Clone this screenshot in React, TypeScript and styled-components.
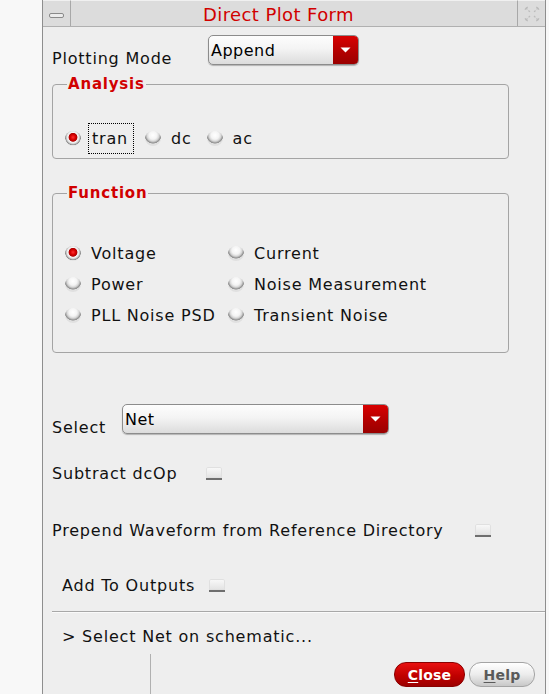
import React from 'react';
import styled, { createGlobalStyle } from 'styled-components';

const Global = createGlobalStyle`
  html, body { margin: 0; padding: 0; background: #f8f8f8; }
  body { font-family: "DejaVu Sans", "Liberation Sans", sans-serif; color: #111; }
`;

const Page = styled.div`
  width: 549px;
  height: 694px;
  overflow: hidden;
  display: flex;
`;

const Window = styled.div`
  margin-left: 42px;
  width: 504px;
  height: 694px;
  box-sizing: border-box;
  border-left: 1px solid #8e8e8e;
  border-right: 1px solid #8e8e8e;
  background: #eeeeee;
  display: flex;
  flex-direction: column;
`;

const TitleBar = styled.div`
  height: 27px;
  flex: none;
  box-sizing: border-box;
  display: flex;
  background: #dcdcdc;
  border-bottom: 1px solid #b0b0b0;
`;

const TitleButton = styled.div<{ $side: 'left' | 'right' }>`
  width: 28px;
  display: flex;
  align-items: center;
  justify-content: center;
  box-sizing: border-box;
  border-top: 1px solid #f0f0f0;
  ${(p) => (p.$side === 'left' ? 'border-right: 1px solid #a8a8a8;' : 'border-left: 1px solid #a8a8a8;')}
`;

const MinIcon = styled.div`
  width: 15px;
  height: 5px;
  margin-top: 4px;
  box-sizing: border-box;
  border: 1px solid #8a8a8a;
  border-radius: 2px;
  background: #ececec;
`;

const Title = styled.div`
  flex: 1;
  text-align: center;
  color: #d10000;
  font-size: 18px;
  letter-spacing: 0.4px;
  line-height: 27px;
  padding-right: 31px;
  border-top: 1px solid #f0f0f0;
  box-sizing: border-box;
`;

const Content = styled.div`
  flex: 1;
  display: flex;
  flex-direction: column;
  padding-left: 9px;
`;

const Row = styled.div<{ $top: number; $h: number; $indent?: number }>`
  display: flex;
  align-items: center;
  margin-top: ${(p) => p.$top}px;
  height: ${(p) => p.$h}px;
  padding-left: ${(p) => p.$indent ?? 0}px;
  flex: none;
`;

const Spacer = styled.div<{ $h: number }>`
  height: ${(p) => p.$h}px;
  flex: none;
`;

const Label = styled.span<{ $w?: number; $dy?: number }>`
  font-size: 16px;
  letter-spacing: 0.8px;
  ${(p) => (p.$w ? `width: ${p.$w}px;` : '')}
  position: relative;
  top: ${(p) => p.$dy ?? 0}px;
  white-space: nowrap;
`;

const Dropdown = styled.div<{ $w: number }>`
  width: ${(p) => p.$w}px;
  height: 30px;
  box-sizing: border-box;
  display: flex;
  border: 1px solid #8c8c8c;
  border-radius: 5px;
  overflow: hidden;
  background: linear-gradient(#fdfdfd 0%, #f4f4f4 45%, #dcdcdc 100%);
  box-shadow: 0 1px 1px rgba(0, 0, 0, 0.25);
`;

const DropdownText = styled.span`
  flex: 1;
  font-size: 16px;
  letter-spacing: 0.5px;
  padding: 2px 0 0 2px;
  line-height: 26px;
  color: #000;
`;

const DropdownArrow = styled.span`
  width: 25px;
  display: flex;
  align-items: center;
  justify-content: center;
  background: linear-gradient(#d80000, #b00000 60%, #9a0000);
`;

const Group = styled.fieldset<{ $padTop: number; $padBottom: number }>`
  margin: 0;
  width: 457px;
  box-sizing: border-box;
  border: 1px solid #a4a4a4;
  border-radius: 4px;
  padding: ${(p) => p.$padTop}px 0 ${(p) => p.$padBottom}px 12px;
  flex: none;
`;

const Legend = styled.legend`
  color: #d10000;
  font-weight: bold;
  font-size: 15px;
  line-height: 17px;
  letter-spacing: 0.8px;
  padding: 0 1px;
  margin-left: 2px;
`;

const RadioRow = styled.div`
  display: flex;
  align-items: center;
  height: 32px;
`;

const RadioGrid = styled.div`
  display: grid;
  grid-template-columns: 163px auto;
  grid-auto-rows: 31px;
  align-items: center;
`;

const RadioItem = styled.label<{ $ml?: number }>`
  display: flex;
  align-items: center;
  margin-left: ${(p) => p.$ml ?? 0}px;
`;

const RadioDot = styled.span<{ $on?: boolean }>`
  width: 16px;
  height: 15px;
  border-radius: 50%;
  flex: none;
  background: ${(p) =>
    p.$on
      ? 'radial-gradient(circle at 50% 42%, #ff3030 0, #d80000 2.5px, #b00000 4px, #f6f6f6 4.8px, #e4e4e4 6px, #8e8e8e 7.6px, #e4e4e4 8.2px)'
      : 'radial-gradient(circle at 50% 28%, #ffffff 0, #f4f4f4 4px, #d6d6d6 6px, #8a8a8a 8px, #e0e0e0 8.6px)'};
`;

const RadioText = styled.span<{ $focus?: boolean }>`
  font-size: 16px;
  letter-spacing: 0.8px;
  margin-left: ${(p) => (p.$focus ? 7 : 10)}px;
  ${(p) =>
    p.$focus
      ? 'border: 1px dotted #000; padding: 5px 5px 5px 3px; line-height: 19px;'
      : ''}
`;

const Check = styled.span<{ $ml: number }>`
  display: inline-block;
  width: 16px;
  height: 13px;
  margin-left: ${(p) => p.$ml}px;
  box-sizing: border-box;
  background: linear-gradient(#fafafa, #e2e2e2);
  border-bottom: 2px solid #6e6e6e;
  border-radius: 2px 2px 0 0;
  box-shadow: inset 0 0 0 1px #e0e0e0;
`;

const Separator = styled.div`
  margin-top: 14px;
  height: 1px;
  background: #a8a8a8;
  border-bottom: 1px solid #fafafa;
  flex: none;
`;

const BottomBar = styled.div`
  flex: 1;
  margin-top: 6px;
  display: flex;
  align-items: flex-start;
`;

const Divider = styled.div`
  width: 1px;
  align-self: stretch;
  background: #b0b0b0;
  margin-left: 98px;
`;

const Buttons = styled.div`
  margin-left: auto;
  margin-right: 10px;
  margin-top: 8px;
  display: flex;
  gap: 4px;
`;

const PillButton = styled.button<{ $primary?: boolean; $w: number }>`
  width: ${(p) => p.$w}px;
  height: 25px;
  border-radius: 12px;
  font-family: "DejaVu Sans", sans-serif;
  font-weight: bold;
  font-size: 14px;
  padding: 0;
  letter-spacing: 0.2px;
  ${(p) =>
    p.$primary
      ? `background: linear-gradient(#e81010, #c00000 55%, #9c0000);
         border: 1px solid #8a0000;
         color: #fff;`
      : `background: linear-gradient(#ffffff, #ececec 50%, #c8c8c8);
         border: 1px solid #a4a4a4;
         color: #5a5a5a;`}
  u { text-decoration-thickness: 1px; text-underline-offset: 2px; }
`;

const Arrow = () => (
  <svg width="11" height="6" viewBox="0 0 11 6">
    <path d="M0.5 0.5 L10.5 0.5 L5.5 5.5 Z" fill="#fff" />
  </svg>
);

const CloseX = () => (
  <svg width="18" height="18" viewBox="0 0 18 18">
    <g stroke="#bcbcbc" strokeWidth="1.3" strokeDasharray="2 1.5" fill="none">
      <path d="M3 3 L7 7 M11 11 L15 15 M15 3 L11 7 M7 11 L3 15" />
      <path d="M3 3 L6 1.5 M15 3 L12 1.5 M3 15 L6 16.5 M15 15 L12 16.5 M3 3 L1.5 6 M15 3 L16.5 6 M3 15 L1.5 12 M15 15 L16.5 12" />
    </g>
  </svg>
);

export default function App() {
  return (
    <Page>
      <Global />
      <Window>
        <TitleBar>
          <TitleButton $side="left">
            <MinIcon />
          </TitleButton>
          <Title>Direct Plot Form</Title>
          <TitleButton $side="right">
            <CloseX />
          </TitleButton>
        </TitleBar>
        <Content>
          <Row $top={8} $h={30}>
            <Label $w={156} $dy={8}>Plotting Mode</Label>
            <Dropdown $w={151}>
              <DropdownText>Append</DropdownText>
              <DropdownArrow>
                <Arrow />
              </DropdownArrow>
            </Dropdown>
          </Row>
          <Spacer $h={11} />
          <Group $padTop={29} $padBottom={4}>
            <Legend>Analysis</Legend>
            <RadioRow>
              <RadioItem>
                <RadioDot $on />
                <RadioText $focus>tran</RadioText>
              </RadioItem>
              <RadioItem $ml={11}>
                <RadioDot />
                <RadioText>dc</RadioText>
              </RadioItem>
              <RadioItem $ml={15}>
                <RadioDot />
                <RadioText>ac</RadioText>
              </RadioItem>
            </RadioRow>
          </Group>
          <Spacer $h={26} />
          <Group $padTop={36} $padBottom={21}>
            <Legend>Function</Legend>
            <RadioGrid>
              <RadioItem>
                <RadioDot $on />
                <RadioText>Voltage</RadioText>
              </RadioItem>
              <RadioItem>
                <RadioDot />
                <RadioText>Current</RadioText>
              </RadioItem>
              <RadioItem>
                <RadioDot />
                <RadioText>Power</RadioText>
              </RadioItem>
              <RadioItem>
                <RadioDot />
                <RadioText>Noise Measurement</RadioText>
              </RadioItem>
              <RadioItem>
                <RadioDot />
                <RadioText>PLL Noise PSD</RadioText>
              </RadioItem>
              <RadioItem>
                <RadioDot />
                <RadioText>Transient Noise</RadioText>
              </RadioItem>
            </RadioGrid>
          </Group>
          <Row $top={51} $h={30}>
            <Label $w={70} $dy={8}>Select</Label>
            <Dropdown $w={267}>
              <DropdownText>Net</DropdownText>
              <DropdownArrow>
                <Arrow />
              </DropdownArrow>
            </Dropdown>
          </Row>
          <Row $top={27} $h={24}>
            <Label>Subtract dcOp</Label>
            <Check $ml={29} />
          </Row>
          <Row $top={33} $h={24}>
            <Label>Prepend Waveform from Reference Directory</Label>
            <Check $ml={31} />
          </Row>
          <Row $top={31} $h={24} $indent={10}>
            <Label>Add To Outputs</Label>
            <Check $ml={14} />
          </Row>
          <Separator />
          <Row $top={11} $h={24} $indent={10}>
            <Label>&gt; Select Net on schematic...</Label>
          </Row>
          <BottomBar>
            <Divider />
            <Buttons>
              <PillButton $primary $w={71}>
                <u>C</u>lose
              </PillButton>
              <PillButton $w={66}>
                <u>H</u>elp
              </PillButton>
            </Buttons>
          </BottomBar>
        </Content>
      </Window>
    </Page>
  );
}
